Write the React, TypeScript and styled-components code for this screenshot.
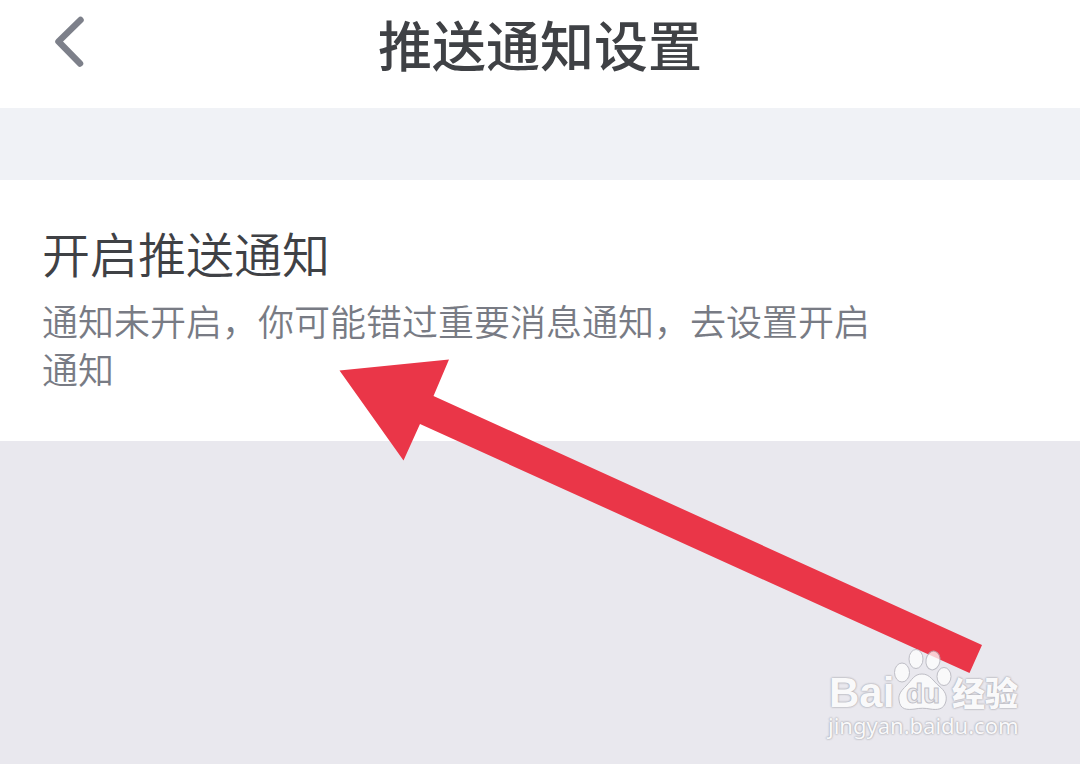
import React from "react";
import styled, { createGlobalStyle } from "styled-components";

const GlobalStyle = createGlobalStyle`
  *, *::before, *::after {
    box-sizing: border-box;
  }

  body {
    margin: 0;
    background: #e9e8ee;
    font-family: "Noto Sans CJK SC", sans-serif;
  }
`;

const Page = styled.div`
  position: relative;
  display: flex;
  flex-direction: column;
  min-height: 100vh;
  overflow: hidden;
`;

const Header = styled.header`
  display: grid;
  grid-template-columns: 96px 1fr 96px;
  align-items: start;
  padding: 8px 0 28px;
  background: #ffffff;
`;

const BackButton = styled.button`
  display: flex;
  justify-content: flex-end;
  padding: 8px 12px 0 0;
  border: 0;
  background: transparent;
  color: #7d808a;
  cursor: pointer;
`;

const Title = styled.h1`
  margin: 0;
  color: #3f4145;
  font-size: 54px;
  font-weight: 500;
  line-height: 72px;
  text-align: center;
`;

const Settings = styled.main`
  padding-top: 72px;
  background: #f0f2f6;
`;

const SettingRow = styled.a`
  display: block;
  padding: 40px 200px 49px 42px;
  background: #ffffff;
  text-decoration: none;
`;

const SettingName = styled.h2`
  margin: 0;
  color: #3f4145;
  font-size: 48px;
  font-weight: 350;
  line-height: 64px;
`;

const SettingNote = styled.p`
  margin: 12px 0 0;
  color: #787b84;
  font-size: 36px;
  font-weight: 350;
  line-height: 48px;
`;

const Pointer = styled.svg`
  position: absolute;
  top: 359px;
  left: 339px;
  pointer-events: none;
`;

const Watermark = styled.div`
  position: absolute;
  right: 58px;
  bottom: 25px;
  width: 194px;
  color: #ffffff;
  opacity: 0.75;
  text-shadow: 0 0 2px #96969e, 0 0 2px #96969e;
`;

const Brand = styled.div`
  display: flex;
  align-items: flex-end;
  height: 64px;
`;

const Latin = styled.span`
  width: 66px;
  padding-left: 1px;
  font-family: "Liberation Sans", sans-serif;
  font-size: 42px;
  font-weight: 700;
  line-height: 36px;
`;

const Paw = styled.span`
  position: relative;
  width: 58px;
  height: 64px;
`;

const PawLabel = styled.span`
  position: absolute;
  right: 0;
  bottom: 3px;
  left: 0;
  font-family: "Liberation Sans", sans-serif;
  font-size: 28px;
  font-weight: 700;
  line-height: 28px;
  text-align: center;
  color: #ececf0;
  -webkit-text-stroke: 1px #b4b4bb;
  text-shadow: none;
`;

const Han = styled.span`
  font-size: 33px;
  font-weight: 900;
  line-height: 38px;
`;

const Address = styled.div`
  font-family: "Noto Sans", sans-serif;
  font-size: 22px;
  line-height: 28px;
`;

export default function App() {
  return (
    <Page>
      <GlobalStyle />
      <Header>
        <BackButton type="button" aria-label="返回">
          <svg width="32" height="52" viewBox="0 0 32 52" fill="none" aria-hidden="true">
            <path
              d="M28.5 4 L6.5 25.5 L28 47.5"
              stroke="currentColor"
              strokeWidth="6.5"
              strokeLinecap="round"
              strokeLinejoin="round"
            />
          </svg>
        </BackButton>
        <Title>推送通知设置</Title>
      </Header>
      <Settings>
        <SettingRow href="#notifications">
          <SettingName>开启推送通知</SettingName>
          <SettingNote>通知未开启，你可能错过重要消息通知，去设置开启通知</SettingNote>
        </SettingRow>
      </Settings>
      <Pointer width="644" height="316" viewBox="0 0 644 316" aria-hidden="true">
        <path d="M0.5 11.5 L110 0.5 L94.5 37 L643 286 L630.5 314 L81 65 L64.5 101.5 Z" fill="#ea3648" />
      </Pointer>
      <Watermark>
        <Brand>
          <Latin>Bai</Latin>
          <Paw>
            <svg width="58" height="64" viewBox="0 0 58 64" fill="#ffffff" stroke="#b0b0b8" aria-hidden="true">
              <ellipse cx="8" cy="25.5" rx="7.5" ry="9.5" />
              <ellipse cx="22" cy="12" rx="7" ry="9.5" />
              <ellipse cx="39" cy="13.5" rx="7" ry="9.5" transform="rotate(10 39 13.5)" />
              <ellipse cx="50" cy="29.5" rx="7" ry="9" />
              <path d="M28 27 C36 27 39 34 45 39 C51 44 53 48 52 54 C50 63 43 63 36 62 C31 61 26 61 21 62 C13 63 6 63 5 53 C4 47 8 43 12 39 C18 33 20 27 28 27 Z" />
            </svg>
            <PawLabel>du</PawLabel>
          </Paw>
          <Han>经验</Han>
        </Brand>
        <Address>jingyan.baidu.com</Address>
      </Watermark>
    </Page>
  );
}
